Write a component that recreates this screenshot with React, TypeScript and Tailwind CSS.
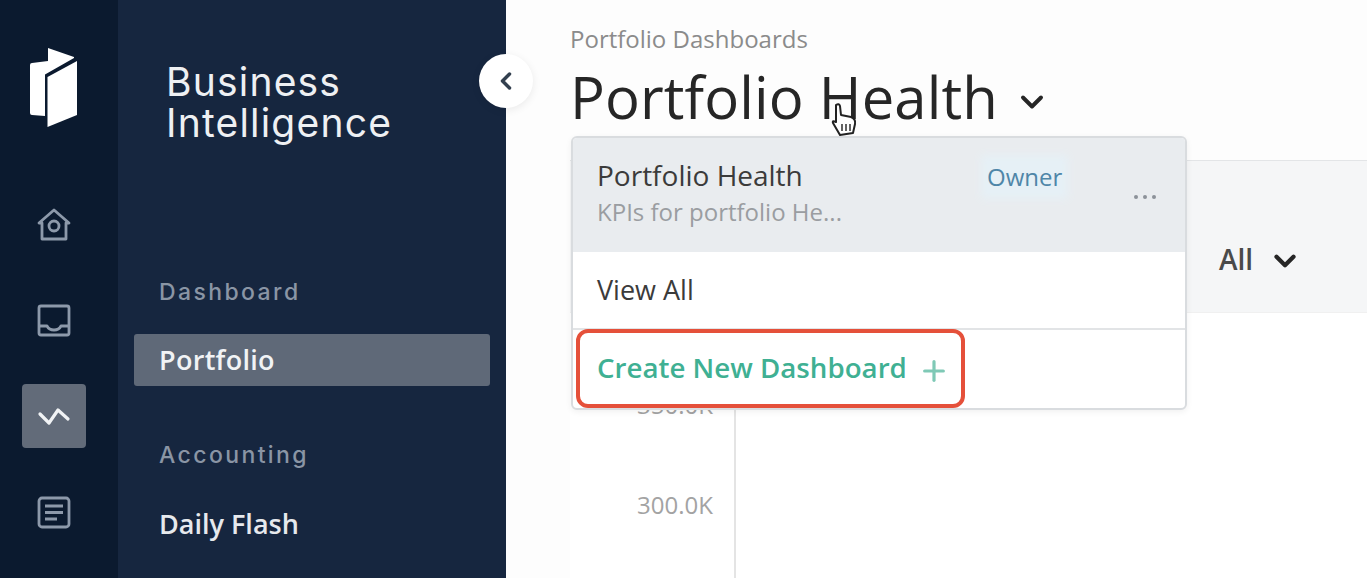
import React from 'react';
import {ChevronDown, ChevronLeft, Plus} from 'lucide-react';

const openSans = { fontFamily: '"Open Sans", sans-serif' };

const Logo = () => (
    <svg width="52" height="80" viewBox="0 0 52 80" className="block">
        <path d="M20 0 L46 9 L46 10 L17 26.5 L17 68 L4 67 Q2 67 2 65 L2 17 Q2 15 4 15 L20 13 Z" fill="#fff" />
        <path d="M19.5 29 L49 13 L49 67 L19.5 79 Z" fill="#fff" />
    </svg>
);

const HomeIcon = () => (
    <svg width="34" height="34" viewBox="0 0 34 34" fill="none" stroke="#8d99aa" strokeWidth="2.8" strokeLinejoin="round" className="block">
        <path d="M2 15 L17 2 L32 15 L29 15 L29 31 L5 31 L5 15 Z" />
        <circle cx="17" cy="18" r="5" />
    </svg>
);

const InboxIcon = () => (
    <svg width="34" height="34" viewBox="0 0 34 34" fill="none" stroke="#8d99aa" strokeWidth="2.8" strokeLinejoin="round" className="block">
        <rect x="2" y="2" width="30" height="29" rx="2" />
        <path d="M2 22 L10 22 Q12 26 17 26 Q22 26 24 22 L32 22" />
    </svg>
);

const TrendIcon = () => (
    <svg width="36" height="20" viewBox="0 0 36 20" fill="none" stroke="#f1f3f5" strokeWidth="3.2" strokeLinecap="round" strokeLinejoin="round" className="block">
        <path d="M4 8 L13 17 L22 4 L32 13" />
    </svg>
);

const ReportIcon = () => (
    <svg width="34" height="34" viewBox="0 0 34 34" fill="none" stroke="#8d99aa" strokeWidth="2.8" className="block">
        <rect x="2" y="2" width="30" height="29" rx="3" />
        <path d="M8 10 L26 10 M8 16.5 L26 16.5 M8 23 L20 23" />
    </svg>
);

const App: React.FC = () => {
    return (
        <div className="relative flex h-[578px] w-[1367px] overflow-hidden bg-white" style={openSans}>
            {/* Icon rail */}
            <div className="flex w-[118px] shrink-0 flex-col items-center bg-[#0b1a2f] pr-[10px] pt-[48px]">
                <Logo />
                <div className="mt-[80px]"><HomeIcon /></div>
                <div className="mt-[62px]"><InboxIcon /></div>
                <div className="mt-[46px] flex h-[64px] w-[64px] items-center justify-center rounded-[4px] bg-[#626b79]">
                    <TrendIcon />
                </div>
                <div className="mt-[48px]"><ReportIcon /></div>
            </div>

            {/* Section sidebar */}
            <div className="flex w-[388px] shrink-0 flex-col bg-[#16263f]">
                <div className="pl-[48px] pt-[61px] font-['Inter',sans-serif] text-[39px] leading-[41px] font-normal tracking-[1.2px] text-[#eef0f3]">
                    Business<br />Intelligence
                </div>
                <div className="mt-[133px] pl-[41px] font-['Inter',sans-serif] text-[23px] leading-[32px] font-medium tracking-[2.4px] text-[#8a95a5]">Dashboard</div>
                <div className="mt-[26px] ml-[16px] flex h-[52px] w-[356px] items-center rounded-[3px] bg-[#5f6978] pl-[25px] text-[27px] font-semibold tracking-[0.3px] text-[#f1f3f5]">Portfolio</div>
                <div className="mt-[53px] pl-[41px] font-['Inter',sans-serif] text-[23px] leading-[32px] font-medium tracking-[2.4px] text-[#8a95a5]">Accounting</div>
                <div className="mt-[35px] pl-[41px] text-[27px] leading-[36px] font-semibold text-[#e6e9ed]">Daily Flash</div>
            </div>

            {/* Main content */}
            <div className="flex min-w-0 flex-1 flex-col bg-[#fdfdfd] pl-[64px]">
                <div className="pt-[23px] text-[24px] leading-[31px] text-[#8b8b8b]">Portfolio Dashboards</div>
                <div className="mt-[7px] flex h-[72px] items-center">
                    <span className="text-[58px] leading-[72px] font-medium tracking-[0.1px] text-[#262626]">Portfolio Health</span>
                    <ChevronDown size={36} strokeWidth={2.6} className="ml-[16px] mt-[10px] text-[#262626]" />
                </div>
                <div className="mt-[27px] flex h-[152px] items-center justify-end border-t border-[#e3e5e7] bg-[#f5f6f7] pr-[65px] pt-[44px]">
                    <span className="text-[28px] font-semibold text-[#4a4a4a]">All</span>
                    <ChevronDown size={34} strokeWidth={3} className="ml-[15px] mt-[4px] text-[#262626]" />
                </div>
                <div className="flex flex-1 border-t border-[#f0f0f0] bg-white">
                    <div className="flex w-[166px] shrink-0 flex-col items-end gap-[70px] border-r-2 border-[#e4e4e4] pr-[21px] pt-[77px]">
                        <span className="text-[24px] leading-[30px] text-[#a3a3a3]">350.0K</span>
                        <span className="text-[24px] leading-[30px] text-[#a3a3a3]">300.0K</span>
                    </div>
                </div>
            </div>

            {/* Collapse button */}
            <div className="absolute left-[479px] top-[54px] flex h-[54px] w-[54px] items-center justify-center rounded-full bg-white shadow-[0_2px_8px_rgba(0,0,0,0.08)]">
                <ChevronLeft size={28} strokeWidth={3} className="text-[#33404f]" />
            </div>

            {/* Dropdown menu */}
            <div className="absolute left-[571px] top-[136px] w-[616px] rounded-[6px] border-2 border-[#d9dcdf] bg-white shadow-[0_2px_6px_rgba(0,0,0,0.06)]">
                <div className="relative h-[114px] rounded-t-[4px] bg-[#e9ecef] pl-[24px] pt-[19px]">
                    <div className="text-[28px] leading-[36px] text-[#3b3b3b]">Portfolio Health</div>
                    <div className="mt-[3px] text-[24px] leading-[32px] text-[#9a9da1]">KPIs for portfolio He...</div>
                    <div className="absolute left-[414px] top-[23px] bg-[#e6f0f6] text-[24px] leading-[32px] text-[#4f86a8] shadow-[0_0_8px_6px_#e6f0f6]">Owner</div>
                    <div className="absolute left-[561px] top-[57px] flex gap-[5px]">
                        <span className="h-[4px] w-[4px] rounded-full bg-[#8c9299]" />
                        <span className="h-[4px] w-[4px] rounded-full bg-[#8c9299]" />
                        <span className="h-[4px] w-[4px] rounded-full bg-[#8c9299]" />
                    </div>
                </div>
                <div className="flex h-[78px] items-center border-b-2 border-[#e2e4e6] pl-[24px] text-[27px] text-[#3b3b3b]">View All</div>
                <div className="flex h-[78px] items-center pb-[2px] pl-[24px]">
                    <span className="text-[27.7px] font-semibold text-[#3fb093]">Create New Dashboard</span>
                    <Plus size={32} strokeWidth={2.4} className="ml-[11px] mt-[6px] text-[#7fc9b6]" />
                </div>
            </div>

            {/* Highlight around the create action */}
            <div className="absolute left-[576px] top-[329px] h-[79px] w-[389px] rounded-[12px] border-[4px] border-[#e5503a]" />

            {/* Cursor */}
            <svg width="30" height="36" viewBox="0 0 30 36" className="absolute left-[829px] top-[102px]">
                <path d="M7 3 Q10 1 11 4 L12 13 L22 15 Q27 17 26 22 L24 31 L11 33 L4 21 Q3 18 7 20 Z" fill="#fff" stroke="#222" strokeWidth="2" strokeLinejoin="round" />
                <path d="M13 22 L13 29 M17 22 L17 29 M21 22 L21 29" stroke="#222" strokeWidth="1.4" />
            </svg>
        </div>
    );
};

export default App;
